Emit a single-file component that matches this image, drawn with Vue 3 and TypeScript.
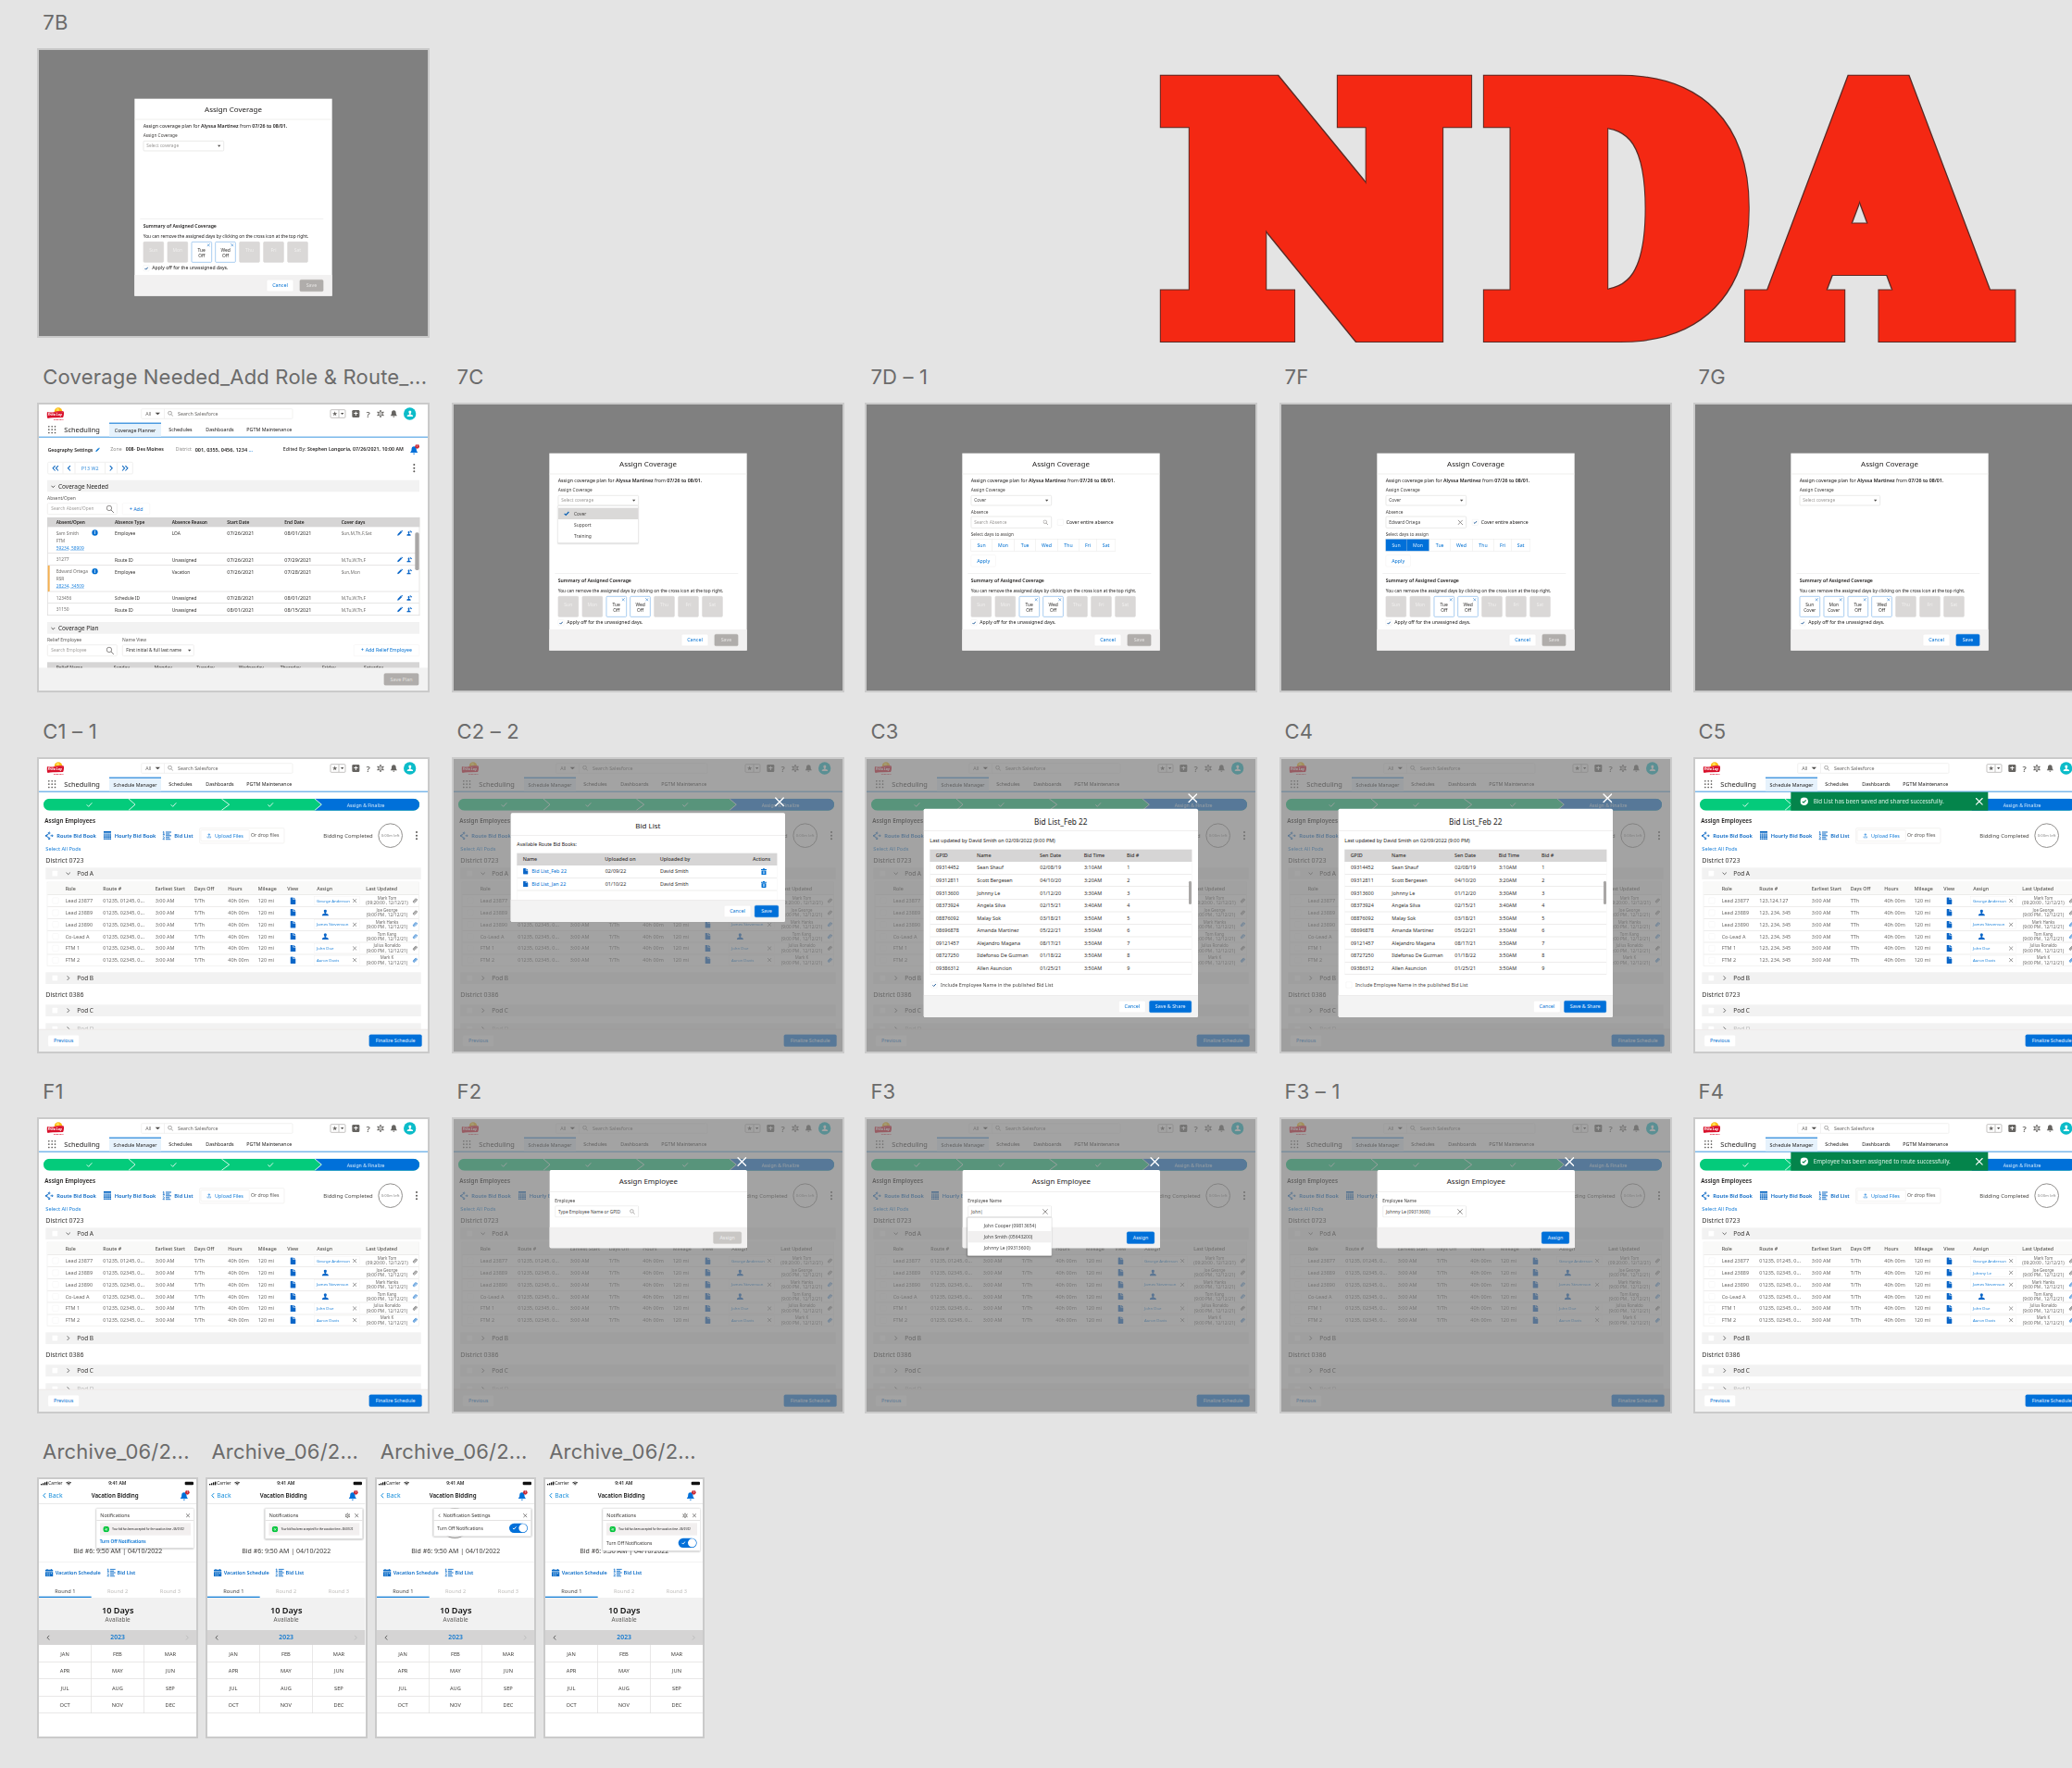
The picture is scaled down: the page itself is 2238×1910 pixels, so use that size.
<script setup lang="ts">
type Kind = 'cover' | 'coverage' | 'schedule' | 'phone'
interface Board {
  label: string
  kind: Kind
  x: number
  y: number
  w: number
  h: number
  state?: string
}

const COL = [42.3, 489.5, 936.4, 1383.5, 1830.6]
const PHONE = [42, 224.4, 406.8, 589.2]

const boards: Board[] = [
  { label: '7B', kind: 'cover', x: COL[0], y: 54.3, w: 420, h: 308.5, state: 'empty' },
  { label: 'Coverage Needed_Add Role & Route_...', kind: 'coverage', x: COL[0], y: 437.3, w: 420, h: 309 },
  { label: '7C', kind: 'cover', x: COL[1], y: 437.3, w: 420, h: 309, state: 'menu' },
  { label: '7D – 1', kind: 'cover', x: COL[2], y: 437.3, w: 420, h: 309, state: 'form' },
  { label: '7F', kind: 'cover', x: COL[3], y: 437.3, w: 420, h: 309, state: 'filled' },
  { label: '7G', kind: 'cover', x: COL[4], y: 437.3, w: 420, h: 309, state: 'done' },
  { label: 'C1 – 1', kind: 'schedule', x: COL[0], y: 820, w: 420, h: 316, state: 'base' },
  { label: 'C2 – 2', kind: 'schedule', x: COL[1], y: 820, w: 420, h: 316, state: 'bidlist' },
  { label: 'C3', kind: 'schedule', x: COL[2], y: 820, w: 420, h: 316, state: 'feb' },
  { label: 'C4', kind: 'schedule', x: COL[3], y: 820, w: 420, h: 316, state: 'febOff' },
  { label: 'C5', kind: 'schedule', x: COL[4], y: 820, w: 420, h: 316, state: 'toastBid' },
  { label: 'F1', kind: 'schedule', x: COL[0], y: 1209, w: 420, h: 316, state: 'base' },
  { label: 'F2', kind: 'schedule', x: COL[1], y: 1209, w: 420, h: 316, state: 'emp' },
  { label: 'F3', kind: 'schedule', x: COL[2], y: 1209, w: 420, h: 316, state: 'empTyping' },
  { label: 'F3 – 1', kind: 'schedule', x: COL[3], y: 1209, w: 420, h: 316, state: 'empPicked' },
  { label: 'F4', kind: 'schedule', x: COL[4], y: 1209, w: 420, h: 316, state: 'toastEmp' },
  ...PHONE.map((x, i): Board => ({ label: 'Archive_06/2...', kind: 'phone', x, y: 1598, w: 170.3, h: 278, state: 'p' + (i + 1) })),
]

const place = (b: Board) => ({ left: b.x + 'px', top: b.y + 'px', width: b.w + 'px', height: b.h + 'px' })

const stamp = [
  { ch: 'N', id: 'fat-n', grow: '12.5 0.01', at: 'translate(29 291.500) scale(0.96 1)' },
  { ch: 'D', id: 'fat-d', grow: '8 0.01', at: 'translate(372 291.500) scale(0.887 1)' },
  { ch: 'A', id: 'fat-a', grow: '3 0.01', at: 'translate(666.500 291.500) scale(0.921 1)' },
]

const days = ['Sun', 'Mon', 'Tue', 'Wed', 'Thu', 'Fri', 'Sat']
const segWidths = [67, 74, 68, 72, 69, 57, 62]
function dayStatus(i: number, state?: string): string {
  if (i === 2 || i === 3) return 'Off'
  if (state === 'done' && i < 2) return 'Cover'
  return ''
}

const absences = [
  { h: 86, name: 'Sam Smith', role: 'FTM', ids: '59234, 58909', type: 'Employee', reason: 'LOA', start: '07/26/2021', end: '08/01/2021', cover: 'Sun,M,Th,F,Sat' },
  { h: 39, name: '31277', type: 'Route ID', reason: 'Unassigned', start: '07/26/2021', end: '07/29/2021', cover: 'M,Tu,W,Th,F' },
  { h: 85, name: 'Edward Ortega', role: 'RSR', ids: '28234, 34509', type: 'Employee', reason: 'Vacation', start: '07/26/2021', end: '07/28/2021', cover: 'Sun,Mon', mark: true },
  { h: 38, name: '123456', type: 'Schedule ID', reason: 'Unassigned', start: '07/28/2021', end: '08/01/2021', cover: 'M,Tu,W,Th,F' },
  { h: 37, name: '31150', type: 'Route ID', reason: 'Unassigned', start: '08/01/2021', end: '08/15/2021', cover: 'M,Tu,W,Th,F' },
]
const weekCols = ['Relief Name', 'Sunday', 'Monday', 'Tuesday', 'Wednesday', 'Thursday', 'Friday', 'Saturday']

function scheduleRows(state?: string) {
  const c5 = state === 'toastBid'
  const f4 = state === 'toastEmp'
  const rest = c5 ? '123, 234, 345' : '01235, 02345, 0...'
  return [
    { role: 'Lead 23877', route: c5 ? '123,124,127' : '01235, 01245, 0...', who: 'George Anderson', by: 'Mark Tom', at: '(09:20:00 , 12/12/21)', clip: false },
    { role: 'Lead 23889', route: rest, who: f4 ? 'Johnny Le' : '', by: 'Joe George', at: '(9:00 PM , 12/12/21)', clip: false },
    { role: 'Lead 23890', route: rest, who: 'James Stevenson', by: 'Mark Hanks', at: '(9:00 PM , 12/12/21)', clip: true },
    { role: 'Co-Lead A', route: rest, who: '', by: 'Tom Kang', at: '(9:00 PM , 12/12/21)', clip: true },
    { role: 'FTM 1', route: rest, who: 'John Doe', by: 'Julius Ronaldo', at: '(9:00 PM , 12/12/21)', clip: false },
    { role: 'FTM 2', route: rest, who: 'Aaron Davis', by: 'Mark K', at: '(9:00 PM , 12/12/21)', clip: true },
  ]
}
const scheduleCols = ['', 'Role', 'Route #', 'Earliest Start', 'Days Off', 'Hours', 'Mileage', 'View', 'Assign', 'Last Updated', '']

const bids = [
  ['09314452', 'Sean Shauf', '02/08/19', '3:10AM'],
  ['09312811', 'Scott Bergesen', '04/10/20', '3:20AM'],
  ['09313600', 'Johnny Le', '01/12/20', '3:30AM'],
  ['08373924', 'Angela Silva', '02/15/21', '3:40AM'],
  ['08876092', 'Malay Sok', '03/18/21', '3:50AM'],
  ['08696878', 'Amanda Martinez', '05/22/21', '3:50AM'],
  ['09121457', 'Alejandro Magana', '08/17/21', '3:50AM'],
  ['08727250', 'Ildefonso De Guzman', '01/18/22', '3:50AM'],
  ['09386312', 'Allen Asuncion', '01/25/21', '3:50AM'],
]
const months = ['JAN', 'FEB', 'MAR', 'APR', 'MAY', 'JUN', 'JUL', 'AUG', 'SEP', 'OCT', 'NOV', 'DEC']
const isToast = (s?: string) => s === 'toastBid' || s === 'toastEmp'
const isEmp = (s?: string) => s === 'emp' || s === 'empTyping' || s === 'empPicked'
const isFeb = (s?: string) => s === 'feb' || s === 'febOff'
</script>

<template>
  <main class="canvas">
    <svg class="defs" width="0" height="0" aria-hidden="true">
      <symbol id="i-search" viewBox="0 0 20 20"><circle cx="8" cy="8" r="6" fill="none" stroke="currentColor" stroke-width="1.8" /><path d="M12.5 12.5L19 19" stroke="currentColor" stroke-width="2" /></symbol>
      <symbol id="i-x" viewBox="0 0 20 20"><path d="M2 2L18 18M18 2L2 18" fill="none" stroke="currentColor" stroke-width="2.6" stroke-linecap="round" /></symbol>
      <symbol id="i-check" viewBox="0 0 20 20"><path d="M2 10.500L7.500 16L18 4.500" fill="none" stroke="currentColor" stroke-width="4" /></symbol>
      <symbol id="i-down" viewBox="0 0 20 20"><path d="M2 6L10 14L18 6" fill="none" stroke="currentColor" stroke-width="3.200" /></symbol>
      <symbol id="i-right" viewBox="0 0 20 20"><path d="M6 1.500L14 10L6 18.500" fill="none" stroke="currentColor" stroke-width="3.200" /></symbol>
      <symbol id="i-left" viewBox="0 0 20 20"><path d="M14 1.500L6 10L14 18.500" fill="none" stroke="currentColor" stroke-width="3.200" /></symbol>
      <symbol id="i-gear" viewBox="0 0 24 24"><circle cx="12" cy="12" r="6.600" fill="none" stroke="currentColor" stroke-width="3" /><circle cx="12" cy="12" r="2.200" fill="currentColor" /><path d="M12 0V5M12 19V24M1.600 6L6 8.500M18 15.500L22.400 18M1.600 18L6 15.500M18 8.500L22.400 6" stroke="currentColor" stroke-width="4" /></symbol>
      <symbol id="i-bell" viewBox="0 0 24 24"><path d="M12 1C7.500 1 5 4.500 5 9C5 14 3.500 16 1.500 17.500V19H22.500V17.500C20.500 16 19 14 19 9C19 4.500 16.500 1 12 1ZM9 20.500A3 3 0 0 0 15 20.500Z" fill="currentColor" /></symbol>
      <symbol id="i-pencil" viewBox="0 0 20 20"><path d="M1 19L2.500 13.500L13 3L17 7L6.500 17.500ZM14 2L15.500 0.800Q16.500 0 17.500 1L19 2.500Q20 3.500 19 4.500L18 6Z" fill="currentColor" /></symbol>
      <symbol id="i-user" viewBox="0 0 20 20"><path d="M10 0.500C7.300 0.500 5.800 2.500 5.800 5C5.800 7.500 7 9.500 8.200 10.600V12.300C4 13.600 0.500 14.500 0.500 17V19.500H19.500V17C19.500 14.500 16 13.600 11.800 12.300V10.600C13 9.500 14.200 7.500 14.200 5C14.200 2.500 12.700 0.500 10 0.500Z" fill="currentColor" /></symbol>
      <symbol id="i-reassign" viewBox="0 0 20 20"><path d="M7.500 4C5.500 4 4.500 5.500 4.500 7.300C4.500 9 5.300 10.300 6.200 11.200V13C3 14 1 15 1 17V19.500H14V17C14 15 12 14 8.800 13V11.200C9.700 10.300 10.500 9 10.500 7.300C10.500 5.500 9.500 4 7.500 4ZM9.500 2.500C12.500 0.500 15.500 2 16.500 5H19.500L15.500 9.500L11.800 5H14.200C13.500 3.600 11.700 2.500 9.500 2.500Z" fill="currentColor" /></symbol>
      <symbol id="i-file" viewBox="0 0 18 22"><path d="M2 0H9V8H18V20Q18 22 16 22H2Q0 22 0 20V2Q0 0 2 0ZM11 0.500L17.500 6.500H11Z" fill="currentColor" /></symbol>
      <symbol id="i-clip" viewBox="0 0 20 20"><path d="M4.500 12.500L12 5Q14.500 3 16.300 5Q18 7 16 9L9 16Q6 18.500 3.500 16Q1 13 3.500 10.500L11.500 2.800M6.500 14L13.500 7" fill="none" stroke="currentColor" stroke-width="2.200" stroke-linecap="round" /></symbol>
      <symbol id="i-route" viewBox="0 0 26 26"><path d="M1 13H8M14 8L13 7.500V3M13 18V24M9.500 4.500L13 1L16.500 4.500M9.500 21.500L13 25L16.500 21.500M17 13H25M22 9.500L25 13L22 16.500" fill="none" stroke="currentColor" stroke-width="2.800" /><path d="M1 13L13 6M1 13L13 20" stroke="currentColor" stroke-width="2.600" /></symbol>
      <symbol id="i-grid" viewBox="0 0 24 27"><path d="M0 0H24V5H0ZM0 7H5V11H0ZM6.300 7H11.300V11H6.300ZM12.700 7H17.700V11H12.700ZM19 7H24V11H19ZM0 12.300H5V16.300H0ZM6.300 12.300H11.300V16.300H6.300ZM12.700 12.300H17.700V16.300H12.700ZM19 12.300H24V16.300H19ZM0 17.600H5V21.600H0ZM6.300 17.600H11.300V21.600H6.300ZM12.700 17.600H17.700V21.600H12.700ZM19 17.600H24V21.600H19ZM0 23H5V27H0ZM6.300 23H11.300V27H6.300ZM12.700 23H17.700V27H12.700ZM19 23H24V27H19Z" fill="currentColor" /></symbol>
      <symbol id="i-list" viewBox="0 0 30 28"><path d="M1 3L4.500 1V11M1 11H8M1 18Q4.500 15.500 6 18.500Q6.500 21 1 26H8" fill="none" stroke="currentColor" stroke-width="2.600" /><path d="M11 2.500H29M11 8.500H24M11 14H29M11 20H24M11 26H27" stroke="currentColor" stroke-width="3" /></symbol>
      <symbol id="i-upload" viewBox="0 0 16 18"><path d="M8 13V3M4 6.500L8 2L12 6.500M1.500 11V16H14.500V11" fill="none" stroke="currentColor" stroke-width="2.200" /></symbol>
      <symbol id="i-trash" viewBox="0 0 18 22"><path d="M0 3H6V0.500H12V3H18V6H0ZM1.500 7.500H16.500V20Q16.500 22 14.500 22H3.500Q1.500 22 1.500 20ZM6 10V19H7.500V10ZM10.500 10V19H12V10Z" fill="currentColor" fill-rule="evenodd" /></symbol>
      <symbol id="i-cal" viewBox="0 0 26 26"><path d="M0 5Q0 3 2 3H5V0H8V3H18V0H21V3H24Q26 3 26 5V8.500H0ZM0 10.500H26V24Q26 26 24 26H2Q0 26 0 24ZM5 14V17H8V14ZM11.500 14V17H14.500V14ZM18 14V17H21V14ZM5 20V23H8V20ZM11.500 20V23H14.500V20Z" fill="currentColor" fill-rule="evenodd" /></symbol>
      <symbol id="i-wifi" viewBox="0 0 20 14"><path d="M1 5Q10 -2 19 5M4.500 8.500Q10 4 15.500 8.500" fill="none" stroke="currentColor" stroke-width="2.800" /><path d="M7 11Q10 8.500 13 11L10 14Z" fill="currentColor" /></symbol>
      <symbol id="i-ok" viewBox="0 0 24 24"><circle cx="12" cy="12" r="12" fill="currentColor" /><path d="M6.500 12.500L10.500 16L17.500 8.500" fill="none" stroke="#04844b" stroke-width="3" /></symbol>
      <symbol id="i-no" viewBox="0 0 20 20"><circle cx="10" cy="10" r="10" fill="#04c53c" /><path d="M5.500 10.500L9 13.500L14.500 7M7 5.500L13 14.500" fill="none" stroke="#fff" stroke-width="1.800" /></symbol>
      <symbol id="i-logo" viewBox="0 0 58 44"><circle cx="38" cy="13" r="12.500" fill="#fdb913" /><circle cx="36" cy="8" r="5" fill="#ffdf4e" /><path d="M2 15Q14 19 28 14Q42 10 54 13Q57 14 56 22Q55 33 52 33Q40 33 28 34Q12 33 4 36Q1 34 1 26Q1 16 2 15Z" fill="#d8112b" /><path d="M3 18Q14 22 28 17Q42 12 54 16" fill="none" stroke="#f1636f" stroke-width="1.500" /></symbol>
    </svg>

    <svg class="nda" width="960" height="330" viewBox="0 0 960 330" role="img" aria-label="NDA">
      <filter v-for="s in stamp" :id="s.id" :key="s.id" filterUnits="userSpaceOnUse" x="-20" y="0" width="1000" height="330" color-interpolation-filters="sRGB">
        <feMorphology operator="dilate" :radius="s.grow" in="SourceGraphic" result="body" />
        <feMorphology operator="dilate" radius="1" in="body" result="grown" />
        <feFlood flood-color="#5a2a25" />
        <feComposite operator="in" in2="grown" result="edge" />
        <feMerge><feMergeNode in="edge" /><feMergeNode in="body" /></feMerge>
      </filter>
      <g v-for="s in stamp" :key="s.ch" :filter="'url(#' + s.id + ')'">
        <text x="0" y="0" :transform="s.at">{{ s.ch }}</text>
      </g>
    </svg>

    <section v-for="(b, n) in boards" :key="n" class="board" :style="place(b)">
      <h2 class="label">{{ b.label }}</h2>
      <div class="frame" :class="{ grey: b.kind === 'cover' }">
        <div class="screen" :class="b.kind">
          <!-- Assign Coverage dialog -->
          <div v-if="b.kind === 'cover'" class="modal assign">
            <div class="m-title">Assign Coverage</div>
            <div class="form">
              <p class="lead">Assign coverage plan for <b>Alyssa Martinez</b> from <b>07/26 to 08/01.</b></p>
              <div class="lbl">Assign Coverage</div>
              <div class="field sel" :class="{ ghost: !['form', 'filled'].includes(b.state!) }">
                <span>{{ ['form', 'filled'].includes(b.state!) ? 'Cover' : 'Select coverage' }}</span><i class="tri" />
              </div>
              <div v-if="b.state === 'menu'" class="menu">
                <div class="opt on"><svg><use href="#i-check" /></svg>Cover</div>
                <div class="opt">Support</div>
                <div class="opt">Training</div>
              </div>
              <template v-if="b.state === 'form' || b.state === 'filled'">
                <div class="lbl gap">Absence</div>
                <div class="absence">
                  <div class="field tall" :class="{ ghost: b.state === 'form' }">
                    <span>{{ b.state === 'form' ? 'Search Absence' : 'Edward Ortega' }}</span>
                    <svg class="ic"><use :href="b.state === 'form' ? '#i-search' : '#i-x'" /></svg>
                  </div>
                  <span class="cb"><svg v-if="b.state === 'filled'"><use href="#i-check" /></svg></span>
                  <span>Cover entire absence</span>
                </div>
                <div class="lbl gap6">Select days to assign</div>
                <div class="seg">
                  <span v-for="(d, i) in days" :key="d" :class="{ on: b.state === 'filled' && i < 2 }" :style="{ width: segWidths[i] + 'px' }">{{ d }}</span>
                </div>
                <div class="btn apply">Apply</div>
              </template>
            </div>
            <div class="summary">
              <div class="s-title">Summary of Assigned Coverage</div>
              <div class="s-note">You can remove the assigned days by clicking on the cross icon at the top right.</div>
              <div class="days">
                <div v-for="(d, i) in days" :key="d" class="day" :class="{ set: dayStatus(i, b.state) }">
                  <svg v-if="dayStatus(i, b.state)"><use href="#i-x" /></svg>
                  <span>{{ d }}</span><small>{{ dayStatus(i, b.state) }}</small>
                </div>
              </div>
              <div class="s-apply"><span class="cb"><svg><use href="#i-check" /></svg></span>Apply off for the unassigned days.</div>
            </div>
            <div class="m-foot">
              <div class="btn">Cancel</div>
              <div class="btn" :class="b.state === 'done' ? 'primary' : 'off'">Save</div>
            </div>
          </div>

          <!-- App chrome -->
          <template v-if="b.kind === 'coverage' || b.kind === 'schedule'">
            <header class="top">
              <div class="logo"><svg><use href="#i-logo" /></svg><em>Frito Lay</em><small>Good fun!</small></div>
              <div class="searchbar">
                <span class="all">All</span><i class="tri big" /><i class="bar" />
                <svg><use href="#i-search" /></svg><span>Search Salesforce</span>
              </div>
              <div class="tools">
                <span class="fav"><b>★</b><i><i class="tri" /></i></span>
                <span class="plus">+</span><span class="q">?</span>
                <svg class="g"><use href="#i-gear" /></svg><svg class="g bell"><use href="#i-bell" /></svg>
                <span class="avatar"><svg><use href="#i-user" /></svg></span>
              </div>
            </header>
            <nav class="nav">
              <span class="dots"><i v-for="k in 9" :key="k" /></span>
              <span class="app">Scheduling</span>
              <span class="tab">{{ b.kind === 'coverage' ? 'Coverage Planner' : 'Schedule Manager' }}</span>
              <span class="t2">Schedules</span><span class="t3">Dashboards</span><span>PGTM Maintenance</span>
            </nav>
          </template>

          <template v-if="b.kind === 'coverage'">
            <div class="geo">
              <b>Geography Settings</b><svg class="pen"><use href="#i-pencil" /></svg>
              <span class="mut zone">Zone</span><b class="des">008- Des Moines</b>
              <span class="mut dist">District</span><b class="nums">001, 0355, 0456, 1234 <em>...</em></b>
              <span class="edit">Edited By: <b>Stephen Longoria, 07/26/2021, 10:00 AM</b></span>
              <span class="alert"><svg><use href="#i-bell" /></svg><i>1</i></span>
            </div>
            <div class="pager">
              <div class="pg">
                <span class="w2">
                  <svg><use href="#i-left" /></svg><svg><use href="#i-left" /></svg>
                </span>
                <span><svg><use href="#i-left" /></svg></span>
                <span class="mid">P13 W2</span>
                <span><svg><use href="#i-right" /></svg></span>
                <span class="w2"><svg><use href="#i-right" /></svg><svg><use href="#i-right" /></svg></span>
              </div>
              <span class="kebab"><i /><i /><i /></span>
            </div>
            <div class="bar1"><svg><use href="#i-down" /></svg>Coverage Needed</div>
            <div class="small">Absent/Open</div>
            <div class="inputs">
              <div class="inp"><span>Search Absent/Open</span><svg><use href="#i-search" /></svg></div>
              <div class="btn add"><b>+</b> Add</div>
            </div>
            <div class="atable">
              <div class="ar head"><span>Absent/Open</span><span>Absence Type</span><span>Absence Reason</span><span>Start Date</span><span>End Date</span><span>Cover days</span></div>
              <div v-for="(r, i) in absences" :key="i" class="ar" :class="{ mark: r.mark }" :style="{ height: r.h + 'px' }">
                <span class="mutd who"><i v-if="r.ids" class="info">i</i>{{ r.name }}<template v-if="r.ids"><br>{{ r.role }}<br><u>{{ r.ids }}</u></template></span>
                <span>{{ r.type }}</span><span>{{ r.reason }}</span><span class="d">{{ r.start }}</span><span class="d">{{ r.end }}</span><span class="mutd">{{ r.cover }}</span>
                <span class="acts"><svg><use href="#i-pencil" /></svg><svg><use href="#i-reassign" /></svg></span>
              </div>
              <i class="thumb" />
            </div>
            <div class="bar1 second"><svg><use href="#i-down" /></svg>Coverage Plan</div>
            <div class="small two"><span>Relief Employee</span><span>Name View</span></div>
            <div class="inputs">
              <div class="inp"><span>Search Employee</span><svg><use href="#i-search" /></svg></div>
              <div class="inp view"><span>First initial &amp; full last name</span><i class="tri" /></div>
              <div class="btn relief"><b>+</b> Add Relief Employee</div>
            </div>
            <div class="week"><span v-for="w in weekCols" :key="w">{{ w }}</span></div>
            <footer class="foot cov"><div class="btn off">Save Plan</div></footer>
          </template>

          <template v-if="b.kind === 'schedule'">
            <div class="steps">
              <svg width="1218" height="39" viewBox="0 0 1218 39">
                <rect width="1218" height="39" rx="19.500" fill="#04cb7b" />
                <path d="M878 0H1198.500A19.500 19.500 0 0 1 1198.500 39H878L901 19.500Z" fill="#0070d9" />
                <path d="M276 1L297 19.500L276 38M577 1L602 19.500L577 38M879 1L901 19.500L879 38" fill="none" stroke="#fff" stroke-width="2.500" />
                <path d="M140 20L146 26L157 14M413 20L419 26L430 14M727 20L733 26L744 14" fill="none" stroke="#fff" stroke-width="2.500" />
              </svg>
              <span>Assign &amp; Finalize</span>
            </div>
            <div class="h1">Assign Employees</div>
            <div class="bar2">
              <svg class="r1"><use href="#i-route" /></svg><b class="l1">Route Bid Book</b>
              <svg class="r2"><use href="#i-grid" /></svg><b class="l2">Hourly Bid Book</b>
              <svg class="r3"><use href="#i-list" /></svg><b class="l3">Bid List</b>
              <div class="drop"><div class="up"><svg><use href="#i-upload" /></svg>Upload Files</div><span>Or drop files</span></div>
              <span class="bc">Bidding Completed</span><span class="ring">0:00m left</span>
              <span class="kebab"><i /><i /><i /></span>
            </div>
            <div class="all-pods">Select All Pods</div>
            <div class="district">District 0723</div>
            <div class="pod"><i class="cb" /><svg class="dn"><use href="#i-down" /></svg>Pod A</div>
            <div class="stable">
              <div class="sr head"><span v-for="(c, i) in scheduleCols" :key="i">{{ c }}</span></div>
              <div v-for="(r, i) in scheduleRows(b.state)" :key="i" class="sr">
                <span><i class="cb" /></span><span>{{ r.role }}</span><span>{{ r.route }}</span><span>3:00 AM</span>
                <span>{{ b.state === 'toastBid' ? 'TTh' : 'T/Th' }}</span><span>40h 00m</span><span>120 mi</span>
                <span class="v"><svg><use href="#i-file" /></svg></span>
                <span v-if="r.who" class="as"><em>{{ r.who }}</em><svg><use href="#i-x" /></svg></span>
                <span v-else class="as none"><svg><use href="#i-user" /></svg></span>
                <span class="upd"><small>{{ r.by }}</small><small class="at">{{ r.at }}</small></span>
                <span class="cl" :class="{ on: r.clip }"><svg><use href="#i-clip" /></svg></span>
              </div>
            </div>
            <div class="pod b"><i class="cb" /><svg><use href="#i-right" /></svg>Pod B</div>
            <div class="district two">District {{ b.state === 'toastBid' ? '0723' : '0386' }}</div>
            <div class="pod"><i class="cb" /><svg><use href="#i-right" /></svg>Pod C</div>
            <div class="pod d"><i class="cb" /><svg><use href="#i-right" /></svg>Pod D</div>
            <footer class="foot"><div class="btn prev">Previous</div><div class="btn primary fin">Finalize Schedule</div></footer>

            <div v-if="isToast(b.state)" class="toast">
              <svg class="ok"><use href="#i-ok" /></svg>
              <span>{{ b.state === 'toastBid' ? 'Bid List has been saved and shared successfully.' : 'Employee has been assigned to route successfully.' }}</span>
              <svg class="tx"><use href="#i-x" /></svg>
            </div>
            <div v-else-if="b.state !== 'base'" class="dim">
              <div v-if="b.state === 'bidlist'" class="modal bid">
                <svg class="close"><use href="#i-x" /></svg>
                <div class="m-title">Bid List</div>
                <div class="note">Available Route Bid Books:</div>
                <div class="bt">
                  <div class="br head"><span>Name</span><span>Uploaded on</span><span>Uploaded by</span><span>Actions</span></div>
                  <div class="br"><span class="lnk"><svg><use href="#i-file" /></svg>Bid List_Feb 22</span><span>02/09/22</span><span>David Smith</span><span class="tr"><svg><use href="#i-trash" /></svg></span></div>
                  <div class="br"><span class="lnk"><svg><use href="#i-file" /></svg>Bid List_Jan 22</span><span>01/10/22</span><span>David Smith</span><span class="tr"><svg><use href="#i-trash" /></svg></span></div>
                </div>
                <div class="m-foot"><div class="btn">Cancel</div><div class="btn primary">Save</div></div>
              </div>
              <div v-if="isFeb(b.state)" class="modal feb">
                <svg class="close"><use href="#i-x" /></svg>
                <div class="m-title">Bid List_Feb 22</div>
                <div class="note">Last updated by David Smith on 02/09/2022 (9:00 PM)</div>
                <div class="bt">
                  <div class="fr head"><span>GPID</span><span>Name</span><span>Sen Date</span><span>Bid Time</span><span>Bid #</span></div>
                  <div v-for="(r, i) in bids" :key="i" class="fr"><span v-for="c in r" :key="c">{{ c }}</span><span>{{ i + 1 }}</span></div>
                  <i class="thumb" />
                </div>
                <div class="inc"><span class="cb"><svg v-if="b.state === 'feb'"><use href="#i-check" /></svg></span>Include Employee Name in the published Bid List</div>
                <div class="m-foot"><div class="btn">Cancel</div><div class="btn primary">Save &amp; Share</div></div>
              </div>
              <div v-if="isEmp(b.state)" class="modal emp">
                <svg class="close"><use href="#i-x" /></svg>
                <div class="m-title">Assign Employee</div>
                <div class="ebody">
                  <div class="lbl">{{ b.state === 'emp' ? 'Employee' : 'Employee Name' }}</div>
                  <div class="field tall">
                    <span>{{ b.state === 'emp' ? 'Type Employee Name or GPID' : b.state === 'empTyping' ? 'John|' : 'Johnny Le (09313600)' }}</span>
                    <svg class="ic"><use :href="b.state === 'emp' ? '#i-search' : '#i-x'" /></svg>
                  </div>
                  <div v-if="b.state === 'empTyping'" class="sugg"><div>John Cooper (09813654)</div><div class="on">John Smith (05643200)</div><div>Johnny Le (09313600)</div></div>
                </div>
                <div class="m-foot"><div class="btn" :class="b.state === 'emp' ? 'off2' : 'primary'">Assign</div></div>
              </div>
            </div>
          </template>

          <template v-if="b.kind === 'phone'">
            <div class="status"><span class="sig"><i /><i /><i /><i /></span><span>Carrier</span><svg><use href="#i-wifi" /></svg><b>9:41 AM</b><i class="bat" /></div>
            <div class="pnav"><svg><use href="#i-left" /></svg><span class="back">Back</span><b>Vacation Bidding</b><span class="alert"><svg><use href="#i-bell" /></svg><i>1</i></span></div>
            <div class="hero"><i v-if="b.state === 'p3'" class="circ" />Bid #6: 9:50 AM | 04/10/2022</div>
            <div class="links"><svg class="c"><use href="#i-cal" /></svg><b>Vacation Schedule</b><svg class="l"><use href="#i-list" /></svg><b>Bid List</b></div>
            <div class="rounds"><span class="on">Round 1</span><span>Round 2</span><span>Round 3</span></div>
            <div class="avail"><b>10 Days</b><span>Available</span></div>
            <div class="year"><svg><use href="#i-left" /></svg><b>2023</b><svg class="fade"><use href="#i-right" /></svg></div>
            <div class="months"><span v-for="m in months" :key="m">{{ m }}</span></div>
            <div class="pop" :class="b.state">
              <div class="ph">
                <svg v-if="b.state === 'p3'" class="bk"><use href="#i-left" /></svg>
                <span>{{ b.state === 'p3' ? 'Notification Settings' : 'Notifications' }}</span>
                <svg v-if="b.state === 'p2' || b.state === 'p4'" class="gr"><use href="#i-gear" /></svg>
                <svg class="px"><use href="#i-x" /></svg>
              </div>
              <div v-if="b.state !== 'p3'" class="msg"><svg><use href="#i-no" /></svg><span>Your bid has been accepted for the vacation time - 06/01/22</span></div>
              <div v-if="b.state === 'p1'" class="off-link">Turn Off Notifications</div>
              <div v-if="b.state === 'p3' || b.state === 'p4'" class="trow"><span>Turn Off Notifications</span><span class="toggle"><svg><use href="#i-check" /></svg><i /></span></div>
            </div>
          </template>
        </div>
      </div>
    </section>
  </main>
</template>

<style>
body { margin: 0; background: #e4e4e4; overflow: hidden; }
</style>

<style scoped>
* { box-sizing: border-box; }
.canvas { position: relative; width: 2238px; height: 1910px; overflow: hidden; background: #e4e4e4; font-family: "Noto Sans", "Open Sans", sans-serif; color: #232120; }
.defs { position: absolute; }
svg { flex: none; display: block; }
i, em { font-style: normal; }
b { font-weight: 600; }
.nda { position: absolute; left: 1240px; top: 60px; overflow: visible; }
.nda text { font: 700 346px "DejaVu Serif", serif; fill: #f42813; stroke: #f42813; stroke-width: 35px; stroke-linejoin: miter; stroke-miterlimit: 6; }

.board { position: absolute; }
.label { position: absolute; left: 4px; top: -44px; margin: 0; font: 400 22px/28px Inter, sans-serif; color: #6b6b6b; letter-spacing: 0.200px; white-space: nowrap; }
.frame { position: absolute; inset: 0; overflow: hidden; background: #fff; outline: 2px solid #cacaca; }
.frame.grey { background: #808080; }
.screen { position: relative; display: flex; flex-direction: column; width: 1260px; height: 948px; transform: scale(0.33333); transform-origin: 0 0; font-size: 16px; line-height: 1.25; white-space: nowrap; }
.screen.coverage { height: 927px; }
.screen.phone { width: 511px; height: 834px; }

/* shared controls */
.tri { display: inline-block; width: 0; height: 0; border: 5px solid transparent; border-top: 6px solid #4a4846; border-bottom: 0; }
.tri.big { border-width: 8px 8px 0; }
.btn { display: flex; align-items: center; justify-content: center; height: 39px; min-width: 87px; background: #fff; border: 1px solid #ecebea; border-radius: 5px; color: #0070d2; font-size: 16px; }
.btn.primary { background: #0070d9; border-color: #0070d9; color: #e4f1ff; }
.btn.off { background: #b0adab; border-color: #b0adab; color: #e2e0df; min-width: 77px; }
.btn.off2 { background: #c9c7c5; border-color: #c9c7c5; color: #eee; min-width: 92px; }
.cb { display: inline-flex; align-items: center; justify-content: center; flex: none; width: 20px; height: 20px; background: #fff; border: 1px solid #e6e6e6; border-radius: 3px; color: #04468c; }
.cb svg { width: 13px; height: 13px; }
.field { position: relative; display: flex; align-items: center; justify-content: space-between; width: 262px; height: 34px; padding: 0 9px; border: 2px solid #e0dfde; border-radius: 4px; font-size: 14.300px; color: #444; background: #fff; }
.field.ghost { color: #9c9a98; }
.field.tall { height: 39px; }
.ic { width: 18px; height: 18px; color: #7a7876; }
.kebab { display: flex; flex-direction: column; gap: 5px; }
.kebab i { width: 6px; height: 6px; border-radius: 3px; background: #5a5755; }

/* dialogs */
.modal { position: absolute; display: flex; flex-direction: column; background: #fff; }
.m-title { display: flex; align-items: center; justify-content: center; flex: none; height: 68px; padding-top: 3px; border-bottom: 2px solid #e7e6e5; font-size: 23.900px; }
.m-foot { display: flex; align-items: center; justify-content: flex-end; flex: none; background: #f2f1f1; }
.assign { left: 310px; top: 158px; width: 640px; height: 639px; }
.form { position: relative; height: 321px; padding-left: 28px; }
.lead { margin: 0; line-height: 38px; font-size: 15.850px; }
.lbl { line-height: 28px; font-size: 14.300px; color: #444240; }
.sel { margin-top: 2px; }
.gap { margin-top: 6px; }
.gap6 { margin-top: 6px; }
.absence { display: flex; align-items: center; margin-top: 0; font-size: 15.500px; }
.absence .cb { margin: 0 9px 0 18px; }
.seg { display: flex; width: 469px; margin-top: 1px; }
.seg span { display: flex; align-items: center; justify-content: center; height: 39px; border: 1px solid #dddcdb; border-right: 0; color: #0070d2; font-size: 15.500px; }
.seg span:last-child { border-right: 1px solid #e4e3e2; }
.seg .on { background: #0070d9; color: #d2e8fd; }
.apply { width: 81px; min-width: 0; margin-top: 12px; }
.menu { position: absolute; left: 27px; top: 102px; width: 263px; height: 121px; padding-top: 5px; background: #fff; border: 2px solid #e1e0df; border-top-color: #eee; border-radius: 4px; box-shadow: 0 2px 4px rgba(0, 0, 0, 0.12); }
.opt { display: flex; align-items: center; height: 36.500px; padding-left: 51px; font-size: 14.700px; color: #444240; }
.opt.on { background: #dad9d8; padding-left: 17px; }
.opt svg { width: 20px; height: 18px; margin-right: 14px; color: #0a60b4; }
.summary { display: flex; flex-direction: column; height: 182px; margin: 0 28px 0 18px; padding-left: 10px; border-top: 2px solid #ebeaea; }
.s-title { height: 40px; line-height: 42px; font-size: 15.400px; font-weight: 600; }
.s-note { height: 32px; line-height: 28px; font-size: 14.450px; letter-spacing: 0; }
.days { display: flex; gap: 10.800px; }
.day { position: relative; display: flex; flex-direction: column; align-items: center; width: 67px; height: 68px; padding-top: 17px; background: #dad8d7; border: 2px solid #dad8d7; border-radius: 4px; color: #efeeed; font-size: 15px; line-height: 18px; }
.day.set { background: #fff; border-color: #80b5ea; color: #33312f; }
.day small { font-size: 14.500px; }
.day svg { position: absolute; right: 4px; top: 4px; width: 11px; height: 11px; color: #0a6cc8; }
.s-apply { display: flex; align-items: center; gap: 9px; height: 36px; font-size: 15.400px; }
.assign .m-foot { height: 68px; gap: 20px; padding-right: 28px; }
.assign .btn.primary { min-width: 77px; }

/* app chrome */
.top { display: flex; align-items: center; flex: none; height: 59px; padding-left: 25px; }
.logo { position: relative; width: 58px; height: 44px; margin-top: 2px; }
.logo svg { width: 58px; height: 44px; }
.logo em { position: absolute; left: 4px; top: 15px; color: #fff; font: italic 700 11px/16px "Noto Sans", sans-serif; }
.logo small { position: absolute; left: 22px; top: 34px; color: #d8112b; font: italic 700 7px/9px "Noto Sans", sans-serif; }
.searchbar { display: flex; align-items: center; width: 492px; height: 34px; margin-left: 248px; padding-left: 13px; border: 2px solid #ecebea; border-radius: 4px; color: #6c6a68; font-size: 15.900px; }
.searchbar .all { width: 31px; }
.searchbar .bar { width: 2px; height: 32px; margin: 0 9px 0 13px; background: #ecebea; }
.searchbar svg { width: 19px; height: 19px; margin-right: 14px; }
.tools { display: flex; align-items: center; margin-left: 121px; color: #666461; }
.fav { display: flex; width: 50px; height: 28px; border: 2px solid #a7a5a3; border-radius: 4px; font-size: 19px; line-height: 24px; }
.fav b { width: 27px; text-align: center; border-right: 2px solid #a7a5a3; }
.fav > i { display: flex; align-items: center; justify-content: center; flex: 1; }
.plus { width: 24px; height: 24px; margin-left: 21px; background: #666461; border-radius: 4px; color: #fff; font-size: 25px; line-height: 22px; font-weight: 700; text-align: center; }
.q { width: 28px; margin-left: 14px; text-align: center; font-size: 28px; line-height: 30px; font-weight: 600; }
.g { width: 24px; height: 24px; margin-left: 14px; }
.bell { margin-left: 19px; }
.avatar { display: flex; align-items: center; justify-content: center; width: 40px; height: 40px; margin-left: 20px; border-radius: 50%; background: #0cbcc9; color: #fff; }
.avatar svg { width: 21px; height: 21px; }
.nav { display: flex; align-items: center; flex: none; height: 48px; padding-left: 30px; border-bottom: 3px solid #3b96e0; font-size: 16px; }
.dots { display: grid; grid-template-columns: repeat(3, 5px); gap: 5px; }
.dots i { width: 5px; height: 5px; border-radius: 50%; background: #5a5856; }
.app { width: 144px; margin-left: 27px; font-size: 22.300px; }
.tab { display: flex; align-items: center; justify-content: center; width: 168px; height: 45px; margin-left: 2px; background: #e6f2fc; border-top: 3px solid #0070d2; }
.t2 { width: 120px; margin-left: 25px; }
.t3 { width: 132px; }

/* coverage planner */
.geo { display: flex; align-items: center; height: 40px; margin-top: 19px; padding-left: 29px; font-size: 15.200px; }
.geo em { color: #2a8ae0; }
.pen { width: 15px; height: 15px; margin-left: 8px; color: #0a78d4; }
.mut { color: #8f8d8b; }
.zone { width: 49px; margin-left: 34px; font-size: 15.600px; }
.des { width: 162px; font-size: 15.600px; }
.dist { width: 63px; font-size: 15.400px; }
.geo .nums { font-size: 16.600px; }
.edit { margin-left: auto; font-size: 15.700px; letter-spacing: 0.150px; }
.alert { position: relative; width: 30px; height: 34px; margin: 0 28px 0 20px; color: #0070d9; }
.alert svg { position: absolute; left: 0; top: 4px; width: 27px; height: 31px; }
.alert i { position: absolute; right: -1px; top: 0; width: 14px; height: 14px; border-radius: 50%; background: #c92a35; color: #fff; font-size: 9px; line-height: 14px; text-align: center; }
.pager { display: flex; align-items: center; justify-content: space-between; height: 40px; margin-top: 20px; padding: 0 41px 0 28px; }
.pg { display: flex; width: 277px; height: 40px; border: 2px solid #e9e8e7; border-radius: 4px; color: #0a66c0; font-size: 16px; }
.pg span { display: flex; align-items: center; justify-content: center; width: 39px; border-right: 2px solid #e9e8e7; }
.pg span:last-child { border: 0; }
.pg .w2 { width: 49px; }
.pg .mid { flex: 1; color: #3a90dc; }
.pg svg { width: 20px; height: 19px; }
.pg .w2 svg { margin: 0 -5px; }
.bar1 { display: flex; align-items: center; gap: 9px; height: 38px; margin: 19px 27px 0; padding: 3px 0 0 11px; background: #f2f2f2; font-size: 19.400px; }
.bar1 svg { width: 16px; height: 14px; }
.small { height: 36px; padding: 3px 0 0 27px; line-height: 32px; font-size: 14.900px; color: #5e5c5a; }
.two { display: flex; height: 35px; }
.two span:first-child { width: 243px; }
.inputs { display: flex; height: 38px; margin: 0 27px; }
.inp { display: flex; align-items: center; justify-content: space-between; width: 227px; padding: 0 8px 0 11px; border: 2px solid #e8e7e6; border-radius: 4px; color: #a19f9d; font-size: 14.300px; }
.inp svg { width: 27px; height: 27px; color: #73716f; }
.add { width: 90px; height: 38px; margin-left: 16px; gap: 4px; }
.inp.view { width: 233px; margin-left: 16px; color: #33312f; font-size: 14.400px; }
.relief { width: 213px; height: 38px; margin-left: auto; gap: 5px; font-size: 15.700px; }
.atable { position: relative; width: 1207px; margin: 8px 0 0 27px; border: 2px solid #dad9d8; border-top: 0; }
.ar { display: grid; grid-template-columns: 190px 185px 179px 186px 184px 180px 1fr; padding: 10px 0 0 27px; border-bottom: 2px solid #dad9d8; font-size: 14.500px; color: #33312f; line-height: 20px; }
.ar:nth-last-child(2) { border-bottom: 0; }
.ar.head { height: 32px; margin: 0 -2px; padding: 6px 0 0 29px; background: #d6d5d5; border: 0; font-weight: 600; font-size: 14.500px; color: #232120; }
.ar .d { font-size: 16.400px; }
.mutd { color: #72706e; }
.who { position: relative; line-height: 24px; margin-top: -3px; }
.who u { color: #2a8ae0; }
.info { position: absolute; left: 116px; top: 2px; width: 19px; height: 19px; border-radius: 50%; background: #0070d2; color: #fff; font-size: 13px; line-height: 18px; text-align: center; font-weight: 700; }
.mark { border-left: 6px solid #f5b04f; padding-left: 21px; }
.acts { display: flex; gap: 11px; color: #0a66c8; }
.acts svg { width: 20px; height: 19px; }
.thumb { position: absolute; right: 0; top: 50px; width: 13px; height: 122px; border-radius: 5px; background: #a9a7a6; }
.second { margin-top: 21px; }
.week { display: grid; grid-template-columns: 186px 132px 137px 136px 135px 136px 135px 1fr; flex: none; height: 34px; margin: 19px 27px 0; padding: 8px 0 0 29px; background: #d6d5d5; font-size: 14.800px; font-weight: 500; color: #3c3a38; }
.foot { position: absolute; left: 0; right: 0; bottom: 0; display: flex; align-items: center; height: 73px; background: #f2f2f2; border-top: 2px solid #e9e0dd; }
.foot.cov { justify-content: flex-end; height: 74px; padding-right: 29px; border: 0; }
.foot.cov .btn { width: 113px; }

/* schedule manager */
.steps { position: relative; flex: none; height: 39px; margin: 21px 0 0 15px; }
.steps span { position: absolute; left: 879px; top: 0; width: 331px; line-height: 42px; text-align: center; color: #cfe6fb; font-size: 15.600px; }
.h1 { height: 50px; line-height: 64px; padding-left: 19px; font-size: 18.900px; font-weight: 600; }
.bar2 { display: flex; align-items: center; height: 62px; padding-left: 20px; color: #0a68c4; }
.bar2 b { font-size: 17.100px; }
.r1 { width: 27px; height: 27px; }
.r2 { width: 25px; height: 28px; }
.r3 { width: 30px; height: 29px; }
.l1 { width: 162px; padding-left: 11px; }
.l2 { width: 166px; padding-left: 11px; }
.l3 { width: 90px; padding: 4px 0 0 9px; }
.drop { display: flex; align-items: center; width: 276px; height: 51px; padding-left: 2px; border: 2px solid #eeedec; border-radius: 4px; color: #5c5a58; font-size: 15.600px; }
.up { display: flex; align-items: center; justify-content: center; gap: 11px; width: 159px; height: 38px; margin-right: 4px; border: 2px solid #eeedec; border-radius: 4px; color: #1a80da; font-size: 16.200px; }
.up svg { width: 15px; height: 17px; }
.bc { width: 177px; margin-left: 126px; color: #4a4844; font-size: 17.700px; }
.ring { width: 80px; height: 80px; border: 3px solid #918f8d; border-radius: 50%; color: #888; font-size: 12.500px; line-height: 74px; text-align: center; }
.bar2 .kebab { margin-left: 42px; }
.all-pods { height: 30px; padding-left: 22px; line-height: 26px; color: #1a80da; font-size: 16.900px; }
.district { height: 43px; padding-left: 22px; line-height: 38px; font-size: 21px; color: #33312f; }
.pod { display: flex; align-items: center; flex: none; height: 38px; margin: 0 22px; padding-left: 20px; background: #f2f2f2; color: #33312f; font-size: 19.400px; }
.pod svg { width: 16px; height: 16px; margin: 0 21px 0 25px; color: #555; }
.pod .cb, .sr .cb { border-color: #ececec; }
.stable { flex: none; width: 1207px; margin: 8px 0 0 26px; border: 2px solid #ededec; }
.sr { display: grid; grid-template-columns: 58px 122px 169px 126px 110px 97px 95px 88px 153px 164px 1fr; align-items: center; height: 38.500px; border-top: 2px solid #e4e3e2; color: #6c6a68; font-size: 16.400px; }
.sr > span:first-child { padding-left: 16px; display: flex; }
.sr.head { height: 39px; background: #f9f9f8; border: 0; font-size: 15.900px; font-weight: 500; color: #55534f; }
.sr.head > span:nth-child(9) { padding-left: 8px; }
.sr.head > span:nth-child(10) { padding-left: 14px; }
.v svg { width: 19px; height: 23px; margin-left: 9px; color: #0a66c8; }
.as { display: flex; align-items: center; justify-content: space-between; width: 146px; height: 30px; padding: 0 7px 0 6px; border: 1px solid #eeedec; color: #1a80da; font-size: 13px; }
.as svg { width: 15px; height: 15px; color: #666; }
.as.none { border: 0; justify-content: flex-start; padding-left: 24px; }
.as.none svg { width: 22px; height: 22px; color: #0a66c8; }
.upd { display: flex; flex-direction: column; align-items: center; line-height: 16px; }
.upd small { font-size: 13.200px; }
.upd .at { font-size: 14.300px; }
.cl svg { width: 19px; height: 18px; color: #666; }
.cl.on svg { color: #1a74cc; }
.pod.b { margin-top: 19px; }
.district.two { height: 67px; line-height: 70px; }
.pod.d { margin-top: 22px; color: #bbb; }
.prev { width: 102px; margin-left: 29px; height: 38px; border-color: #f0f0f0; }
.fin { width: 171px; margin: 0 19px 0 auto; }
.toast { position: absolute; left: 310px; top: 107px; display: flex; align-items: center; width: 639px; height: 60px; padding: 0 16px 0 30px; background: #04844b; color: #d6f0e2; font-size: 18.800px; }
.ok { width: 26px; height: 26px; margin-right: 17px; color: #fff; }
.tx { width: 25px; height: 25px; margin-left: auto; color: #fff; }
.dim { position: absolute; inset: 0; background: rgba(124, 124, 124, 0.7); }
.dim .modal { border-radius: 5px; }
.close { position: absolute; width: 32px; height: 32px; color: #fff; right: 2px; top: -52px; }
.bid { left: 185px; top: 175px; width: 889px; height: 353px; }
.bid .m-title { height: 73px; padding-top: 8px; }
.note { height: 57px; padding-left: 20px; line-height: 58px; font-size: 15.600px; }
.bt { position: relative; flex: 1; width: 843px; margin-left: 20px; border-left: 1px solid #eee; border-right: 1px solid #eee; }
.br { display: grid; grid-template-columns: 266px 178px 301px 1fr; align-items: center; height: 41px; padding-left: 19px; border-bottom: 2px solid #e4e3e2; font-size: 16.300px; color: #33312f; }
.br.head, .fr.head { height: 40px; margin: 0 -1px; background: #d6d5d5; border: 0; font-weight: 500; }
.lnk { display: flex; align-items: center; gap: 11px; color: #0070d2; }
.lnk svg { width: 17px; height: 20px; color: #0a66c8; }
.tr svg { width: 18px; height: 22px; margin-left: 26px; color: #0070d2; }
.dim .m-foot { height: 72px; gap: 12px; padding-right: 21px; border-top: 2px solid #e4e3e3; border-radius: 0 0 5px 5px; background: #f3f3f3; }
.bid .btn.primary { min-width: 78px; }
.feb { left: 185px; top: 161px; width: 889px; height: 676px; }
.feb .close { top: -50px; right: 1px; }
.feb .m-title { height: 72px; padding-top: 12px; font-size: 24.800px; }
.feb .note { height: 60px; line-height: 62px; font-size: 16.200px; }
.feb .bt { width: 849px; flex: none; }
.fr { display: grid; grid-template-columns: 133px 204px 143px 139px 1fr; align-items: center; height: 40.700px; padding-left: 19px; border-bottom: 2px solid #e4e3e2; font-size: 16.300px; color: #33312f; }
.feb .thumb { top: 102px; right: 0; width: 9px; height: 76px; }
.inc { display: flex; align-items: center; gap: 11px; flex: 1; padding-left: 24px; font-size: 15.900px; color: #4a4846; }
.feb .btn.primary { width: 137px; }
.emp { left: 311px; top: 165px; width: 640px; height: 253px; }
.emp .close { right: 1px; top: -43px; }
.emp .m-title { height: 71px; padding-top: 4px; }
.ebody { position: relative; flex: 1; padding: 16px 0 0 17px; }
.ebody .field { width: 272px; padding-right: 10px; }
.dim .emp .m-foot { height: 68px; padding-right: 18px; border: 0; background: #f2f1f1; }
.emp .btn.primary { min-width: 90px; }
.sugg { position: absolute; z-index: 2; left: 16px; top: 83px; width: 273px; height: 124px; padding-top: 6px; background: #fff; border: 1px solid #ddd; border-radius: 3px; box-shadow: 0 2px 5px rgba(0, 0, 0, 0.25); font-size: 15px; color: #444; }
.sugg div { height: 37px; padding-left: 52px; line-height: 36px; }
.sugg .on { background: #f1f0f0; }

/* phone */
.status { display: flex; align-items: center; flex: none; height: 26px; padding-left: 6px; font-size: 14px; color: #222; }
.sig { display: flex; align-items: flex-end; gap: 2px; width: 25px; height: 11px; }
.sig i { width: 4px; background: #111; height: 4px; }
.sig i:nth-child(2) { height: 6px; }
.sig i:nth-child(3) { height: 9px; }
.sig i:nth-child(4) { height: 11px; }
.status svg { width: 19px; height: 13px; margin-left: 10px; color: #111; }
.status b { margin-left: 120px; font-size: 15px; }
.bat { width: 28px; height: 11px; margin: 0 10px 0 auto; border-radius: 3px; background: #111; }
.pnav { display: flex; align-items: center; flex: none; height: 55px; padding-left: 9px; border-bottom: 2px solid #dedede; color: #111; }
.pnav > svg { width: 18px; height: 20px; color: #0a88d8; }
.back { width: 139px; margin-left: 4px; color: #1a90dc; font-size: 20.500px; }
.pnav b { font-size: 18.600px; }
.pnav .alert { margin: 0 24px 0 auto; }
.hero { position: relative; flex: none; height: 188px; padding-top: 115px; border-bottom: 2px solid #ebebeb; text-align: center; font-size: 21px; line-height: 72px; color: #3c3a38; }
.circ { position: absolute; left: 205px; top: 12px; width: 96px; height: 99px; border: 3px solid #a09e9c; border-radius: 50%; }
.links { display: flex; align-items: center; flex: none; height: 68px; padding-left: 20px; color: #0a6cc8; }
.links b { font-size: 16.600px; }
.links .c { width: 27px; height: 26px; margin-right: 6px; }
.links .l { width: 29px; height: 28px; margin: 0 5px 0 19px; }
.rounds { display: flex; flex: none; height: 47px; font-size: 17px; color: #c2c0be; }
.rounds span { flex: 1; line-height: 52px; text-align: center; }
.rounds .on { color: #4a4846; border-bottom: 4px solid #1b83d8; }
.avail { display: flex; flex-direction: column; align-items: center; flex: none; height: 105px; padding-top: 23px; background: #f1f1f1; color: #111; }
.avail b { font-size: 27.500px; line-height: 36px; }
.avail span { font-size: 19.300px; line-height: 26px; color: #5c5a58; }
.year { display: flex; align-items: center; justify-content: space-between; flex: none; height: 48px; padding: 0 22px; background: #d5d4d4; color: #555; font-size: 20.500px; }
.year b { color: #1078d0; }
.year svg { width: 17px; height: 17px; }
.year .fade { color: #bbb; }
.months { display: grid; grid-template-columns: repeat(3, 1fr); }
.months span { height: 55.500px; border-right: 2px solid #dedddc; border-bottom: 2px solid #dedddc; text-align: center; line-height: 58px; font-size: 17px; color: #44423f; }
.months span:nth-child(3n) { border-right: 0; }
.pop { position: absolute; left: 186px; top: 95px; width: 316px; height: 128px; background: #fff; border: 1px solid #e8e8e8; box-shadow: 0 2px 6px rgba(0, 0, 0, 0.4); color: #3c3a38; font-size: 16px; }
.pop.p2 { height: 98px; left: 187px; }
.pop.p3 { height: 90px; left: 184px; }
.pop.p4 { height: 137px; left: 186px; }
.ph { display: flex; align-items: center; height: 38px; padding: 8px 11px 0 12px; border-bottom: 2px solid #d5d4d4; }
.ph .px { width: 14px; height: 14px; margin-left: auto; }
.ph .gr { width: 18px; height: 18px; margin-left: auto; color: #706e6b; }
.ph .gr + .px { margin-left: 14px; }
.ph .bk { width: 12px; height: 12px; margin-right: 6px; }
.msg { display: flex; align-items: center; gap: 10px; height: 40px; margin: 8px 9px 0 11px; padding-left: 10px; background: #f2efef; overflow: hidden; }
.msg svg { width: 20px; height: 20px; }
.msg span { font-size: 8.200px; font-weight: 500; color: #333; }
.off-link { padding-left: 10px; line-height: 39px; font-size: 14.200px; font-weight: 600; color: #0070d2; }
.trow { display: flex; align-items: center; justify-content: space-between; height: 48px; padding: 0 10px 0 11px; font-size: 14.700px; }
.toggle { display: flex; align-items: center; justify-content: space-between; width: 60px; height: 31px; padding: 0 2px 0 10px; border-radius: 16px; background: #0070d9; color: #fff; }
.toggle svg { width: 14px; height: 14px; }
.toggle i { width: 27px; height: 27px; border-radius: 50%; background: #fff; }
</style>
